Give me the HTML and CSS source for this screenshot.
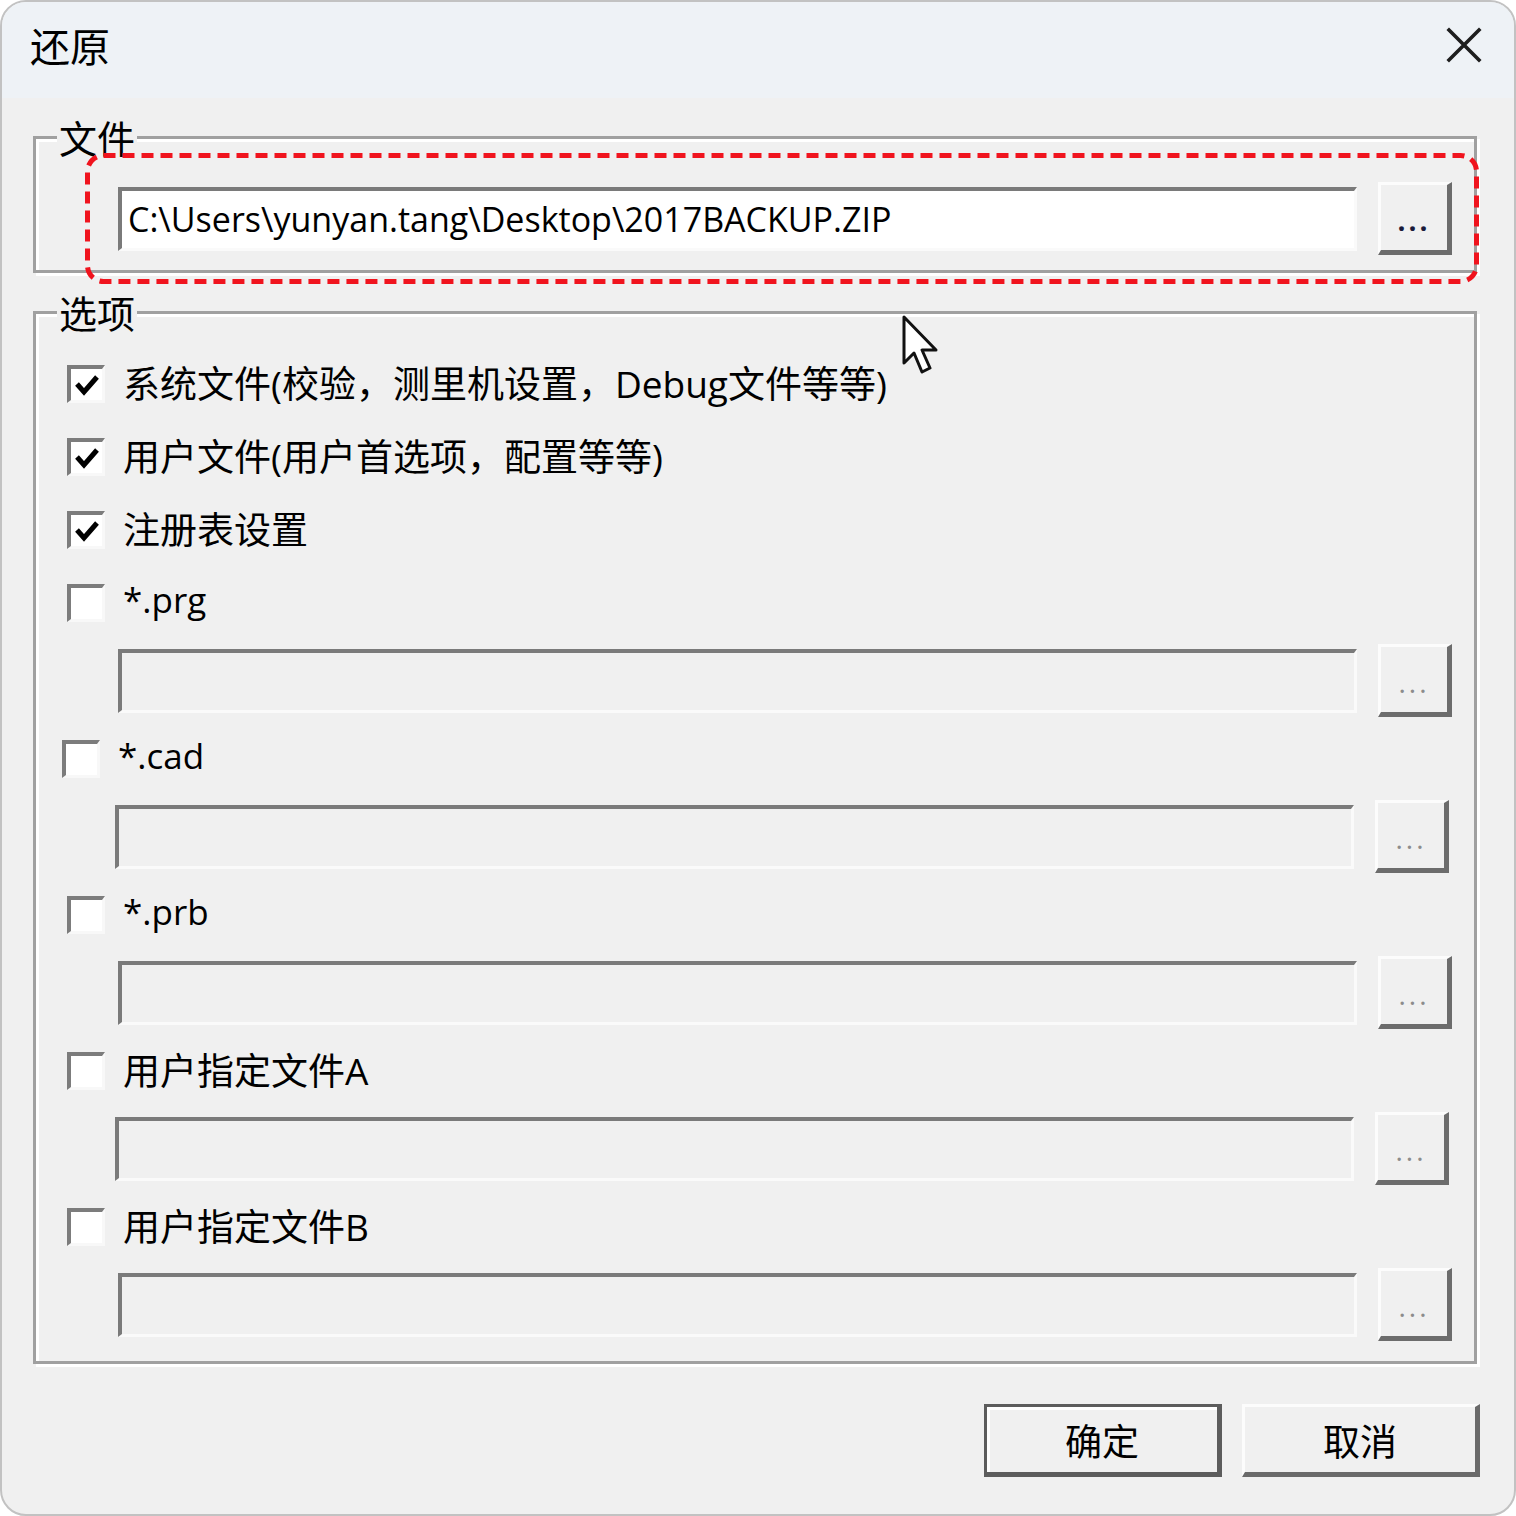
FILE: index.html
```html
<!DOCTYPE html>
<html lang="zh-CN">
<head>
    <meta charset="UTF-8">
    <title>还原</title>
    <link rel="stylesheet" href="styles.css">
</head>
<body>
    <div class="window">
        <div class="titlebar">
            <span class="title">还原</span>
            <svg class="close" width="36" height="36" viewBox="0 0 36 36">
                <path d="M3 3 L33 33 M33 3 L3 33" stroke="#1e1e1e" stroke-width="3.6" stroke-linecap="square"/>
            </svg>
        </div>

        <fieldset class="group">
            <legend>文件</legend>
            <div class="path-row first">
                <div class="field">C:\Users\yunyan.tang\Desktop\2017BACKUP.ZIP</div>
                <button class="browse">...</button>
            </div>
        </fieldset>

        <fieldset class="group options">
            <legend>选项</legend>
            <div class="opt">
                <span class="box checked"><svg width="30" height="30" viewBox="0 0 30 30"><path d="M5 15 L12 23 L25 8" fill="none" stroke="#000" stroke-width="5"/></svg></span>
                <span class="label">系统文件(校验，测里机设置，Debug文件等等)</span>
            </div>
            <div class="opt">
                <span class="box checked"><svg width="30" height="30" viewBox="0 0 30 30"><path d="M5 15 L12 23 L25 8" fill="none" stroke="#000" stroke-width="5"/></svg></span>
                <span class="label">用户文件(用户首选项，配置等等)</span>
            </div>
            <div class="opt">
                <span class="box checked"><svg width="30" height="30" viewBox="0 0 30 30"><path d="M5 15 L12 23 L25 8" fill="none" stroke="#000" stroke-width="5"/></svg></span>
                <span class="label">注册表设置</span>
            </div>
            <div class="opt">
                <span class="box"></span>
                <span class="label latin">*.prg</span>
            </div>
            <div class="path-row">
                <div class="field disabled"></div>
                <button class="browse disabled">...</button>
            </div>
            <div class="opt nudge">
                <span class="box"></span>
                <span class="label latin">*.cad</span>
            </div>
            <div class="path-row nudge">
                <div class="field disabled"></div>
                <button class="browse disabled">...</button>
            </div>
            <div class="opt">
                <span class="box"></span>
                <span class="label latin">*.prb</span>
            </div>
            <div class="path-row">
                <div class="field disabled"></div>
                <button class="browse disabled">...</button>
            </div>
            <div class="opt">
                <span class="box"></span>
                <span class="label">用户指定文件A</span>
            </div>
            <div class="path-row nudge">
                <div class="field disabled"></div>
                <button class="browse disabled">...</button>
            </div>
            <div class="opt">
                <span class="box"></span>
                <span class="label">用户指定文件B</span>
            </div>
            <div class="path-row">
                <div class="field disabled"></div>
                <button class="browse disabled">...</button>
            </div>
        </fieldset>

        <div class="actions">
            <button class="btn default">确定</button>
            <button class="btn">取消</button>
        </div>

        <!-- annotation drawn over the file row -->
        <svg class="mark" width="1394" height="131" viewBox="0 0 1394 131">
            <rect x="2.5" y="2.5" width="1389" height="126" rx="16" fill="none" stroke="#f0141e" stroke-width="5" stroke-dasharray="12 7"/>
        </svg>

        <svg class="cursor" width="40" height="62" viewBox="0 0 40 62">
            <path d="M2 2 L2 48 L12 38 L20 57 L28 53 L20 35 L34 35 Z" fill="#fff" stroke="#111" stroke-width="3" stroke-linejoin="round"/>
        </svg>
    </div>
</body>
</html>
```

FILE: styles.css
```css
body {
    margin: 0;
    background: #ffffff;
    font-family: "Open Sans", "Noto Sans CJK SC", sans-serif;
    color: #000;
}

.window {
    position: relative;
    width: 1516px;
    height: 1516px;
    box-sizing: border-box;
    border: 2px solid #c2c2c2;
    border-radius: 26px;
    background: #f0f0f0;
    overflow: hidden;
}

.titlebar {
    height: 86px;
    padding: 0 32px 10px 28px;
    display: flex;
    align-items: center;
    justify-content: space-between;
    background: #eef2f6;
}
.title
{
    font-family: "Noto Sans CJK SC", sans-serif;
    font-size: 40px;
}

.group {
    margin: 16px 37px 0 31px;
    padding: 0 22px 15px 24px;
    border: 3px solid #a0a0a0;
    box-shadow: inset 3px 3px 0 #fff, 3px 3px 0 #fff;
    min-width: 0;
}
.group legend {
    margin-left: -3px;
    padding: 0 2px;
    background: #f0f0f0;
    font-family: "Noto Sans CJK SC", sans-serif;
    font-size: 38px;
    line-height: 46px;
}
.options {
    padding-top: 12px;
}

.path-row {
    display: flex;
    align-items: center;
    gap: 21px;
    height: 83px;
    padding-left: 58px;
}
.path-row.first {
    height: 73px;
    padding-top: 22px;
}
.field {
    flex: 1;
    height: 64px;
    box-sizing: border-box;
    border-style: solid;
    border-width: 4px 3px 3px 4px;
    border-color: #7a7a7a #fafafa #fafafa #7a7a7a;
    background: #fff;
    padding-left: 6px;
    font-size: 34px;
    line-height: 56px;
    white-space: nowrap;
}
.field.disabled {
    background: #f0f0f0;
}
.browse {
    width: 74px;
    height: 73px;
    box-sizing: border-box;
    border-style: solid;
    border-width: 3px 5px 5px 3px;
    border-color: #fcfcfc #6c6c6c #6c6c6c #fcfcfc;
    background: #f0f0f0;
    padding: 4px 0 0 0;
    font-family: "Open Sans", sans-serif;
    font-size: 28px;
    font-weight: bold;
    letter-spacing: 3px;
    color: #1a1a3a;
}
.browse.disabled
{
    color: #8c8c8c;
    font-weight: normal;
}

.opt {
    display: flex;
    align-items: center;
    gap: 18px;
    height: 73px;
    padding-left: 7px;
}
.box {
    width: 38px;
    height: 38px;
    box-sizing: border-box;
    border-style: solid;
    border-width: 4px 3px 3px 4px;
    border-color: #7c7c7c #f8f8f8 #f8f8f8 #7c7c7c;
    background: #fff;
    display: flex;
    align-items: center;
    justify-content: center;
}
.label {
    font-size: 37px;
    line-height: 46px;
    white-space: nowrap;
}
.label.latin {
    font-size: 35px;
    margin-top: -6px;
}
.opt.nudge {
    padding-left: 2px;
}
.path-row.nudge {
    padding-left: 55px;
    padding-right: 3px;
}

.actions {
    display: flex;
    justify-content: flex-end;
    gap: 20px;
    margin: 40px 34px 0 0;
}
.btn {
    width: 238px;
    height: 73px;
    box-sizing: border-box;
    border-style: solid;
    border-width: 3px 5px 5px 3px;
    border-color: #fcfcfc #6a6a6a #6a6a6a #fcfcfc;
    background: #f0f0f0;
    font-family: "Noto Sans CJK SC", sans-serif;
    font-size: 37px;
    color: #000;
    padding: 0;
}
.btn.default {
    border-color: #5c5c5c;
    box-shadow: inset 3px 3px 0 #fff;
}

.mark {
    position: absolute;
    left: 83px;
    top: 151px;
}
.cursor {
    position: absolute;
    left: 900px;
    top: 313px;
}
```
